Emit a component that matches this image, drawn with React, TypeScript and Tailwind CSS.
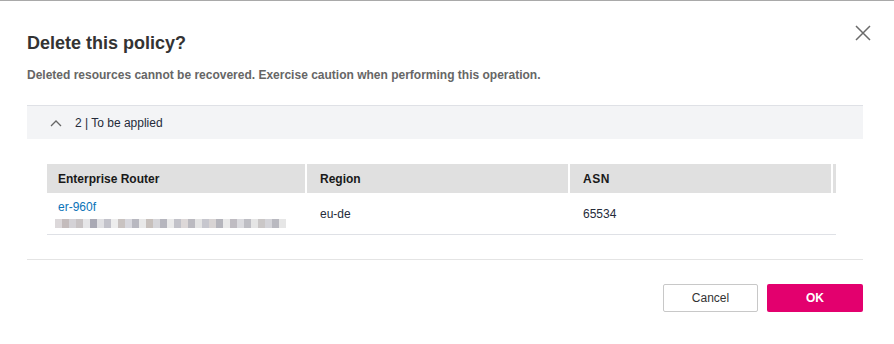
import React from "react";

export default function App() {
  return (
    <div
      className="w-[894px] h-[344px] bg-white border-t border-[#a9a9a9] relative overflow-hidden"
      style={{ fontFamily: '"Liberation Sans", Arial, sans-serif' }}
    >
      <button className="absolute left-[855px] top-[24px] w-[16px] h-[16px]">
        <svg width="16" height="16" viewBox="0 0 16 16">
          <path d="M1 1 L15 15 M15 1 L1 15" stroke="#6b6b6b" strokeWidth="1.5" fill="none" />
        </svg>
      </button>
      <div className="pl-[27px] pr-[31px] pt-[30px]">
        <h1 className="text-[18px] leading-[24px] font-bold text-[#333333]">Delete this policy?</h1>
        <p className="mt-[12px] text-[12px] leading-[16px] font-bold text-[#666666]">
          Deleted resources cannot be recovered. Exercise caution when performing this operation.
        </p>
        <div className="mt-[22px] h-[34px] bg-[#f3f4f6] border-t border-[#dfe1e6] flex items-center">
          <svg width="12" height="8" viewBox="0 0 12 8" className="ml-[23px]">
            <path d="M1 7 L6 2 L11 7" stroke="#666" strokeWidth="1.3" fill="none" />
          </svg>
          <span className="ml-[13px] text-[12px] text-[#252b3a]">2 | To be applied</span>
        </div>
        <div className="px-[20px] pt-[25px]">
          <div className="w-[789px]">
            <div className="grid grid-cols-[260px_263px_263px_3px] h-[29px] bg-[#e0e0e0] text-[12px] font-bold text-[#191919]">
              <div className="flex items-center pl-[11px] border-r-2 border-white">Enterprise Router</div>
              <div className="flex items-center pl-[13px] border-r-2 border-white">Region</div>
              <div className="flex items-center pl-[13px] border-r-2 border-white tracking-[0.5px]">ASN</div>
              <div />
            </div>
            <div className="grid grid-cols-[260px_263px_263px_3px] h-[42px] border-b border-[#dfe1e6] text-[12px] text-[#252b3a]">
              <div className="flex flex-col justify-center pl-[11px] gap-[5px]">
                <span className="text-[#0a73b8] leading-[14px]">er-960f</span>
                <div className="flex h-[9px] w-[231px] -ml-[3px] overflow-hidden">
                  {[
                    "#dcd8da", "#c4bcbc", "#d4d2d6", "#c8c3c4", "#e6e6e8", "#a9a9b4", "#e0e0e3", "#c2c2ca",
                    "#ededed", "#c9c3c1", "#d8d8de", "#b8b8c0", "#e8e8e8", "#c7c0bc", "#d6d6da", "#b6b6be",
                    "#eaeaea", "#c2c2c9", "#ddd8d8", "#bbbac0", "#e4e4e4", "#c7c7ce", "#d8d4d4", "#b5b5bc",
                    "#e9e9e9", "#bfbcc2", "#dbdbdf", "#bebec4", "#e5e5e5", "#cac7c7", "#d4d4d9", "#b9b9c0",
                    "#e6e6e6",
                  ].map((c, i) => (
                    <div key={i} className="h-full w-[7px] shrink-0" style={{ background: c }} />
                  ))}
                </div>
              </div>
              <div className="flex items-center pl-[13px]">eu-de</div>
              <div className="flex items-center pl-[13px]">65534</div>
              <div />
            </div>
          </div>
        </div>
        <div className="mt-[24px] border-t border-[#e4e4e4]" />
        <div className="flex justify-end gap-[9px] mt-[24px]">
          <button className="w-[95px] h-[28px] border border-[#c8c8c8] rounded-[2px] text-[12px] text-[#333] bg-white">
            Cancel
          </button>
          <button className="w-[96px] h-[28px] rounded-[2px] text-[12px] font-bold text-white bg-[#e3006e]">
            OK
          </button>
        </div>
      </div>
    </div>
  );
}
